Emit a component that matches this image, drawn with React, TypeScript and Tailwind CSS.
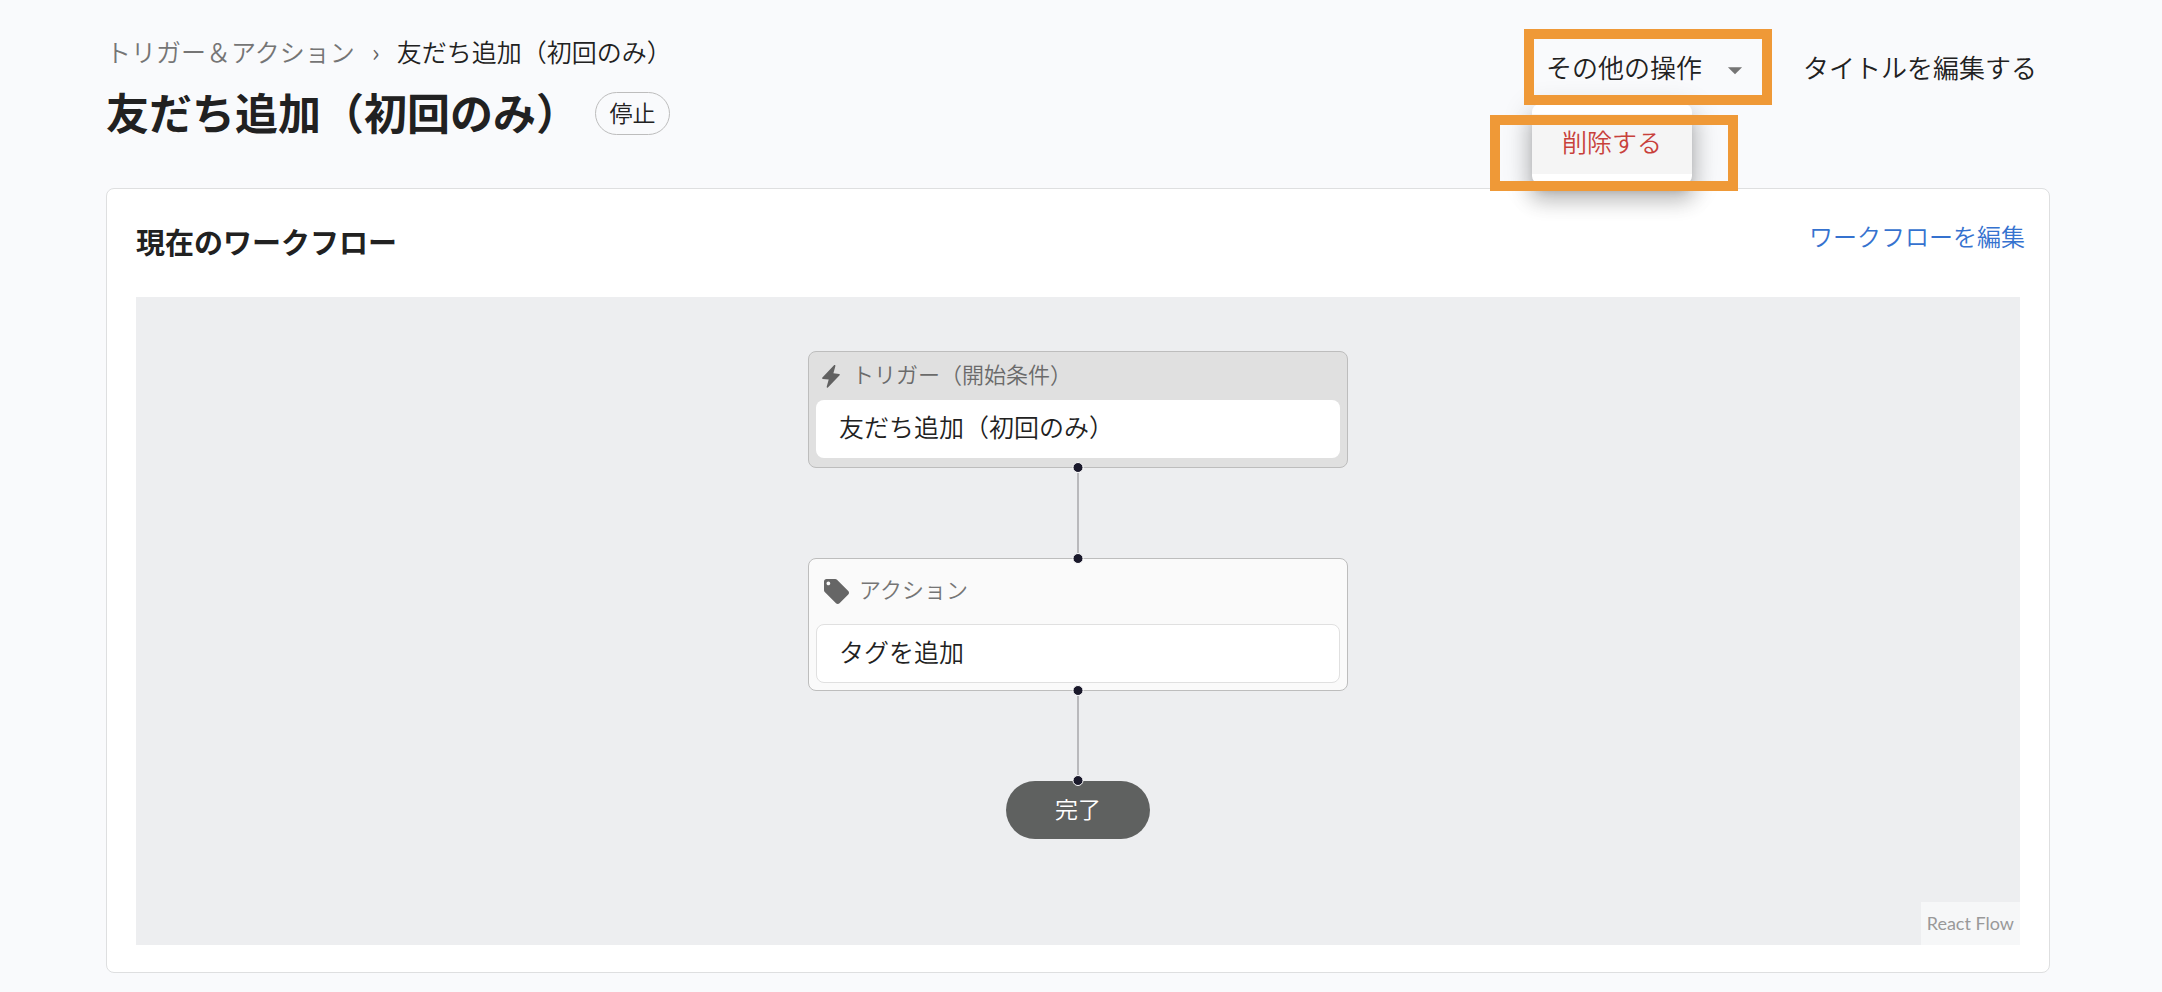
import type { ReactNode } from "react";

function Highlight({ className }: { className: string }) {
  return (
    <span
      aria-hidden="true"
      className={`pointer-events-none absolute z-20 border-10 border-[#ef9937] ${className}`}
    />
  );
}

function BoltIcon() {
  return (
    <svg viewBox="0 0 18 23" className="h-[23px] w-[18px] shrink-0" fill="#616161" aria-hidden="true">
      <path d="M12 .2.400 12.600c-.5.600-.3 1.200.5 1.300l5.800.6-2 7.300c-.2.9.6 1.300 1.200.7L17.600 10.200c.5-.6.300-1.200-.5-1.300l-5.700-.6 2-7.300c.2-.9-.8-1.400-1.400-.8z" />
    </svg>
  );
}

function TagIcon() {
  return (
    <svg viewBox="2 2 20 20" className="size-[25px] shrink-0" fill="#666666" aria-hidden="true">
      <path d="M21.410 11.580l-9-9C12.050 2.220 11.550 2 11 2H4c-1.100 0-2 .9-2 2v7c0 .550.220 1.050.590 1.420l9 9c.360.360.860.580 1.410.580s1.050-.220 1.410-.590l7-7c.370-.360.590-.860.590-1.410s-.230-1.060-.590-1.420zM5.500 7C4.670 7 4 6.330 4 5.500S4.670 4 5.500 4 7 4.670 7 5.500 6.330 7 5.500 7z" />
    </svg>
  );
}

function Handle({ side }: { side: "top" | "bottom" }) {
  return (
    <span
      className={`absolute left-1/2 z-10 size-[11px] -translate-x-1/2 rounded-full border border-white bg-[#1a192b] ${
        side === "top" ? "-top-1.5" : "-bottom-1.5"
      }`}
    />
  );
}

function Edge() {
  return <div className="h-[90px] w-0.5 bg-[#b9b9bc]" />;
}

function Node({ className, children }: { className: string; children: ReactNode }) {
  return (
    <div className={`relative w-[540px] rounded-lg border border-[#bdbdbd] px-[7px] ${className}`}>
      {children}
    </div>
  );
}

export default function App() {
  return (
    <main className="min-h-screen bg-[#f9fafc] pt-[33px] pr-28 pb-[19px] pl-[106px] font-['Noto_Sans_CJK_JP',sans-serif] font-[350] text-[#212121]">
      <header className="flex h-[155px] items-start justify-between">
        <div>
          <nav aria-label="パンくず" className="flex text-[25px] leading-9">
            <a href="#list" className="text-[#757575]">トリガー＆アクション</a>
            <span className="w-[42px] text-center text-[#616161]">›</span>
            <span>友だち追加（初回のみ）</span>
          </nav>
          <div className="mt-3.5 flex items-center">
            <h1 className="text-[43px] leading-14 font-bold">友だち追加（初回のみ）</h1>
            <span className="mt-1 ml-4 flex h-[43px] w-[75px] items-center justify-center rounded-full border border-[#bdbdbd] pb-0.5 text-[23px] leading-8">
              停止
            </span>
          </div>
        </div>

        <div className="mt-1.5 flex gap-6 text-[26px]">
          <div className="relative">
            <button type="button" aria-haspopup="menu" aria-expanded="true" className="flex h-[58px] items-center gap-4 px-3.5">
              <span className="pb-1">その他の操作</span>
              <svg viewBox="0 0 24 24" className="mt-1 size-[34px]" fill="#757575" aria-hidden="true">
                <path d="M7 10l5 5 5-5z" />
              </svg>
            </button>
            <div
              role="menu"
              className="absolute top-[65px] left-0 z-10 w-40 rounded-lg bg-white py-2.5 shadow-[0_10px_10px_-6px_rgba(0,0,0,0.28),0_16px_20px_2px_rgba(0,0,0,0.18),0_6px_28px_4px_rgba(0,0,0,0.14)]"
            >
              <button role="menuitem" type="button" className="h-[60px] w-full bg-[#f5f5f5] pb-1 text-[25px] text-[#c8413b]">
                削除する
              </button>
            </div>
            <Highlight className="-top-2.5 -left-2 h-[76px] w-[248px]" />
            <Highlight className="top-[76px] -left-[42px] h-[76px] w-[248px]" />
          </div>
          <button type="button" className="h-[58px] px-[13px] pb-1">タイトルを編集する</button>
        </div>
      </header>

      <section className="rounded-lg border border-[#dedfe0] bg-white pb-[27px]">
        <div className="flex items-start justify-between pt-[29px] pr-6 pb-[33px] pl-[29px]">
          <h2 className="text-[29px] leading-[46px] font-bold">現在のワークフロー</h2>
          <a href="#edit" className="text-2xl leading-9 text-[#3572cf]">ワークフローを編集</a>
        </div>

        <div className="relative mx-[29px] flex flex-col items-center bg-[#edeef0] pt-[54px] pb-[106px]">
          <Node className="bg-[#e0e0e0] pb-[9px]">
            <div className="flex h-12 items-center gap-3 pl-1.5 text-[22px] text-[#6b6b6b]">
              <BoltIcon />
              <span className="pb-1.5">トリガー（開始条件）</span>
            </div>
            <div className="flex h-[58px] items-center rounded-lg bg-white px-[23px] pb-1 text-[25px]">
              友だち追加（初回のみ）
            </div>
            <Handle side="bottom" />
          </Node>
          <Edge />
          <Node className="bg-[#fafafa] pb-[7px]">
            <div className="flex h-[65px] items-center gap-2.5 pl-2 text-[22px] text-[#757575]">
              <TagIcon />
              <span className="pb-1.5">アクション</span>
            </div>
            <div className="flex h-[59px] items-center rounded-lg border border-[#e0e0e0] bg-white px-[22px] pb-1 text-[25px]">
              タグを追加
            </div>
            <Handle side="top" />
            <Handle side="bottom" />
          </Node>
          <Edge />
          <div className="relative flex h-[58px] w-36 items-center justify-center rounded-full bg-[#5f6160] pb-1 text-[23px] text-white">
            完了
            <Handle side="top" />
          </div>

          <a
            href="#flow"
            className="absolute right-0 bottom-0 bg-white/50 px-1.5 py-2 font-[Lato,sans-serif] text-lg leading-[27px] font-normal text-[#999999]"
          >
            React Flow
          </a>
        </div>
      </section>
    </main>
  );
}
